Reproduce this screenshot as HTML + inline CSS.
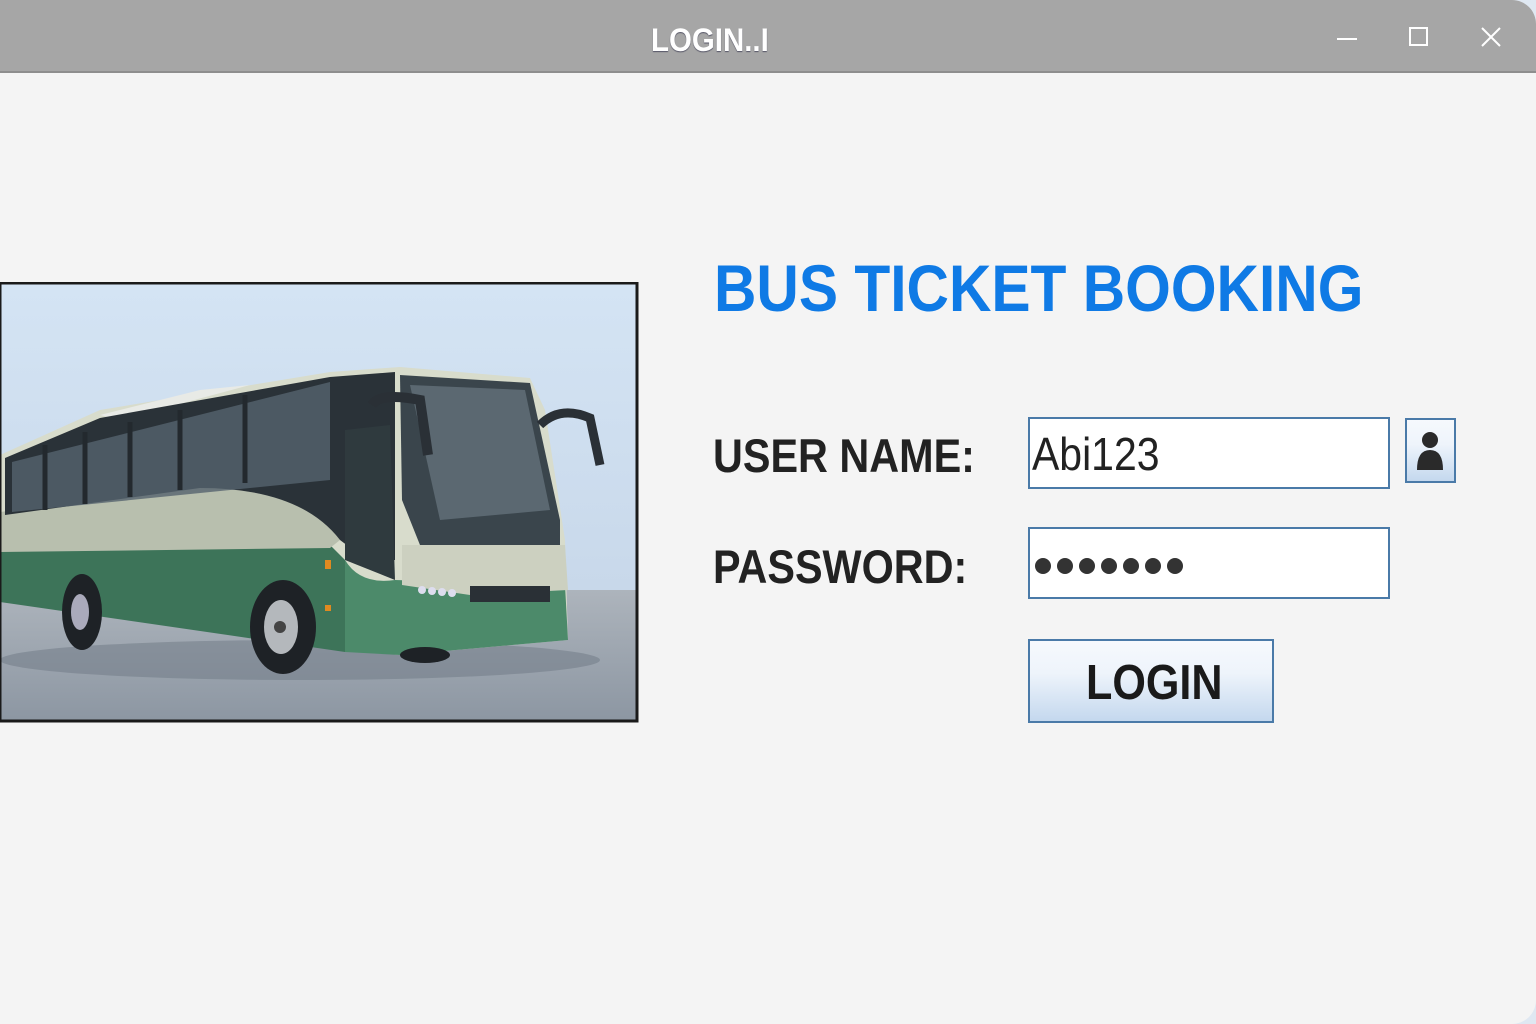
<!DOCTYPE html>
<html><head><meta charset="utf-8"><style>
*{margin:0;padding:0;box-sizing:border-box}
html,body{width:1536px;height:1024px;overflow:hidden;background:#dfe8f2}
.win{position:absolute;left:0;top:0;width:1536px;height:1024px;background:#f4f4f4;border-radius:0 24px 24px 0;overflow:hidden;font-family:"Liberation Sans",sans-serif}
.tb{position:absolute;left:0;top:0;width:1536px;height:73px;background:#a6a6a6;border-bottom:2px solid #8e8e8e}
.tt{position:absolute;left:651px;top:22px;font-size:32px;font-weight:bold;color:#fff;transform:scaleX(.92);transform-origin:left;text-shadow:0 1px 1px #556}
.t{position:absolute;white-space:nowrap;transform-origin:left top}
.field{position:absolute;background:#fff;border:2px solid #4a7aa8}
.btn{position:absolute;border:2px solid #4a7aa8;background:linear-gradient(#f6f9fd,#eef4fb 40%,#c4d8ee)}
</style></head><body><div class="win">
<div class="tb">
<div class="tt">LOGIN..I</div>
<div style="position:absolute;left:1337px;top:38px;width:20px;height:2px;background:#fff"></div>
<div style="position:absolute;left:1409px;top:27px;width:19px;height:19px;border:2px solid #fff"></div>
<svg style="position:absolute;left:1480px;top:26px" width="22" height="22"><path d="M2 2L20 20M20 2L2 20" stroke="#fff" stroke-width="2"/></svg>
</div>

<svg style="position:absolute;left:0;top:282px" width="640" height="442" viewBox="0 282 640 442">
<defs>
<linearGradient id="sky" x1="0" y1="0" x2="0" y2="1"><stop offset="0" stop-color="#d4e4f4"/><stop offset="1" stop-color="#c8d8ea"/></linearGradient>
<linearGradient id="gr" x1="0" y1="0" x2="0" y2="1"><stop offset="0" stop-color="#adb4bc"/><stop offset="1" stop-color="#8c96a2"/></linearGradient>
</defs>
<rect x="0" y="283" width="637" height="310" fill="url(#sky)"/>
<rect x="0" y="590" width="637" height="132" fill="url(#gr)"/>
<ellipse cx="300" cy="660" rx="300" ry="20" fill="#6e7884" opacity=".5"/>
<path d="M0 455 L100 410 L330 372 L400 367 L530 378 L545 410 L565 540 L568 640 L400 655 L340 650 L0 600Z" fill="#d8dccc"/>
<path d="M100 415 L200 390 L250 385 L120 420Z" fill="#e8eae6"/>
<path d="M0 550 L330 545 L345 560 L345 652 L0 602Z" fill="#3d7459"/>
<path d="M345 560 Q360 585 395 580 L565 585 L568 640 L400 655 L345 652Z" fill="#4c8a6a"/>
<path d="M0 512 L200 488 Q300 488 340 540 L330 548 L0 552Z" fill="#b8bfae"/>
<path d="M5 458 L100 418 L330 377 L395 372 L395 560 Q365 560 340 540 Q300 488 200 488 L5 515Z" fill="#2a3238"/>
<path d="M12 462 L330 382 L330 480 L12 512Z" fill="#55636e" opacity=".8"/>
<path d="M45 445 v65 M85 432 v72 M130 422 v75 M180 410 v80 M245 395 v88" stroke="#23292e" stroke-width="5"/>
<path d="M400 375 L530 383 L560 520 L560 545 L420 545 L402 500Z" fill="#3a454c"/>
<path d="M410 385 L525 390 L550 510 L440 520Z" fill="#6a7882" opacity=".7"/>
<path d="M402 545 L565 545 L568 590 L470 595 L402 585Z" fill="#ccd0c0"/>
<rect x="470" y="586" width="80" height="16" fill="#2a3036"/>
<circle cx="422" cy="590" r="4" fill="#dde"/><circle cx="432" cy="591" r="4" fill="#dde"/><circle cx="442" cy="592" r="4" fill="#dde"/><circle cx="452" cy="593" r="4" fill="#dde"/>
<path d="M345 430 L390 425 L395 580 L345 560Z" fill="#2f3a3e"/>
<path d="M372 405 Q380 392 420 400 L428 455" stroke="#2a3036" stroke-width="10" fill="none"/>
<path d="M540 425 Q560 405 590 418 L600 465" stroke="#2a3036" stroke-width="9" fill="none"/>
<ellipse cx="82" cy="612" rx="20" ry="38" fill="#1e2226"/><ellipse cx="80" cy="612" rx="9" ry="18" fill="#aab"/>
<ellipse cx="283" cy="627" rx="33" ry="47" fill="#1e2226"/><ellipse cx="281" cy="627" rx="17" ry="27" fill="#b4b8bc"/><circle cx="280" cy="627" r="6" fill="#444"/>
<ellipse cx="425" cy="655" rx="25" ry="8" fill="#1e2226"/>
<rect x="325" y="560" width="6" height="9" fill="#e08a20"/><rect x="325" y="605" width="6" height="6" fill="#e08a20"/>
<rect x="0" y="283" width="637" height="438" fill="none" stroke="#1a1a1a" stroke-width="3"/>
</svg>

<div class="t" style="left:714px;top:250px;font-size:66px;font-weight:bold;color:#0f7ae5;transform:scaleX(.89)">BUS TICKET BOOKING</div>
<div class="t" style="left:713px;top:428px;font-size:47px;font-weight:bold;color:#222;transform:scaleX(.88)">USER NAME:</div>
<div class="t" style="left:713px;top:539px;font-size:47px;font-weight:bold;color:#222;transform:scaleX(.88)">PASSWORD:</div>

<div class="field" style="left:1028px;top:417px;width:362px;height:72px"></div>
<div class="t" style="left:1032px;top:427px;font-size:46px;color:#222;transform:scaleX(.89)">Abi123</div>
<div class="btn" style="left:1405px;top:418px;width:51px;height:65px"></div>
<svg style="position:absolute;left:1413px;top:428px" width="34" height="44"><circle cx="17" cy="12" r="8" fill="#2a2a2a"/><path d="M4 42 Q4 22 17 22 Q30 22 30 42Z" fill="#2a2a2a"/></svg>

<div class="field" style="left:1028px;top:527px;width:362px;height:72px"></div>
<svg style="position:absolute;left:1034px;top:556px" width="150" height="20">
<g fill="#333"><circle cx="9" cy="10" r="8"/><circle cx="31" cy="10" r="8"/><circle cx="53" cy="10" r="8"/><circle cx="75" cy="10" r="8"/><circle cx="97" cy="10" r="8"/><circle cx="119" cy="10" r="8"/><circle cx="141" cy="10" r="8"/></g></svg>

<div class="btn" style="left:1028px;top:639px;width:246px;height:84px"></div>
<div class="t" style="left:1086px;top:655px;font-size:49px;font-weight:bold;color:#1a1a1a;transform:scaleX(.88)">LOGIN</div>
</div></body></html>
